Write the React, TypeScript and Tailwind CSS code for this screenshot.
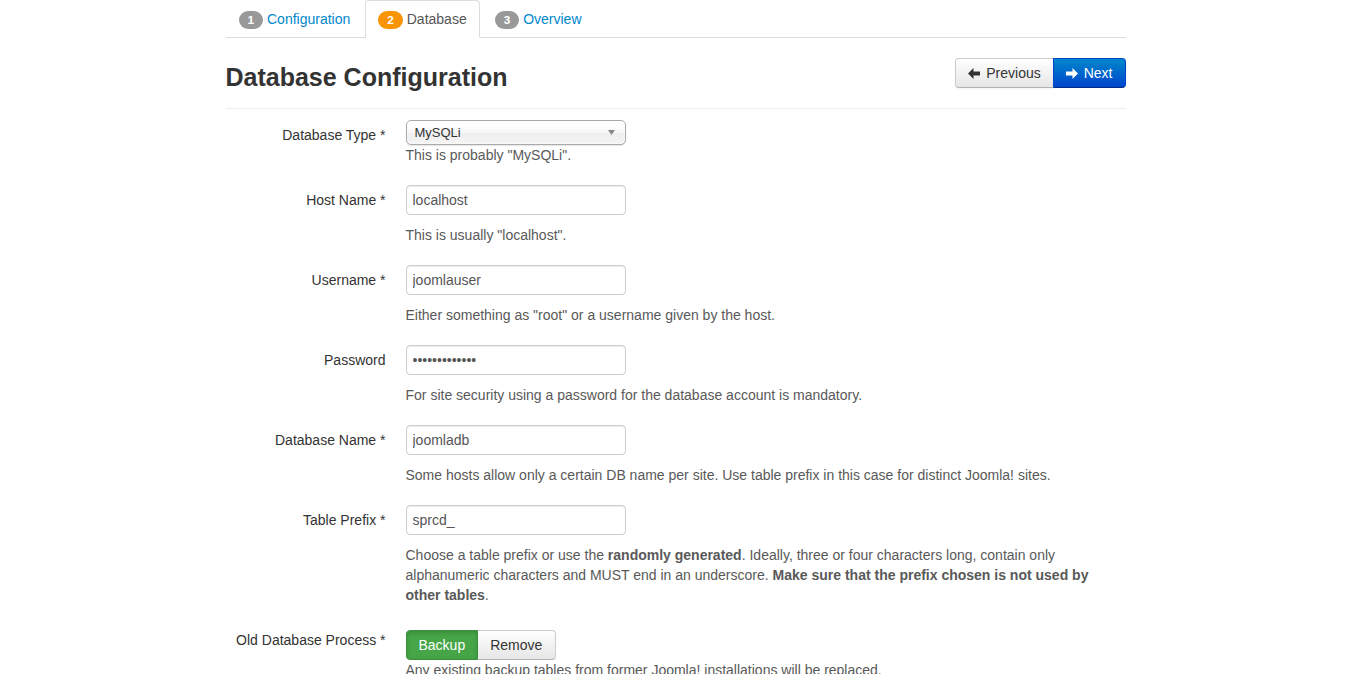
import React from "react";

const ArrowLeft = () => (
  <svg width="12" height="11" viewBox="0 0 12 11" className="inline-block mr-[6px] -mt-[2px] align-middle">
    <path d="M0 5.5 L5.5 0 V3.5 H12 V7.5 H5.5 V11 Z" fill="currentColor" />
  </svg>
);
const ArrowRight = () => (
  <svg width="12" height="11" viewBox="0 0 12 11" className="inline-block mr-[6px] -mt-[2px] align-middle">
    <path d="M12 5.5 L6.5 0 V3.5 H0 V7.5 H6.5 V11 Z" fill="currentColor" />
  </svg>
);

const Badge = ({ n, active }: { n: string; active?: boolean }) => (
  <span
    className={
      "inline-block px-[9px] py-[2px] rounded-[9px] text-[11.844px] font-bold leading-[14px] text-white align-baseline " +
      (active ? "bg-[#f89406]" : "bg-[#999999]")
    }
  >
    {n}
  </span>
);

const Label = ({ children }: { children: React.ReactNode }) => (
  <div className="w-[160px] shrink-0 text-right pt-[5px] leading-5 text-[#333]">{children}</div>
);

const Help = ({ children, className = "" }: { children: React.ReactNode; className?: string }) => (
  <div className={"leading-5 text-[#595959] " + className}>{children}</div>
);

const TextInput = ({ value, type = "text" }: { value: string; type?: string }) => (
  <input
    type={type}
    value={value}
    readOnly
    className="block w-[220px] h-[30px] px-[6px] border border-[#cccccc] rounded-[4px] text-[14px] text-[#555] bg-white shadow-[inset_0_1px_1px_rgba(0,0,0,0.075)] outline-none"
    style={{ fontFamily: "inherit" }}
  />
);

const Group = ({ label, children }: { label: React.ReactNode; children: React.ReactNode }) => (
  <div className="flex mb-[20px]">
    <Label>{label}</Label>
    <div className="ml-[20px] flex-1">{children}</div>
  </div>
);

export default function App() {
  return (
    <div
      className="min-h-[674px] bg-white text-[14px] leading-5 text-[#333]"
      style={{ fontFamily: '"Liberation Sans", Arial, Helvetica, sans-serif' }}
    >
      <div className="w-[900px] mx-auto">
        {/* Tabs */}
        <ul className="flex border-b border-[#dddddd] h-[38px]">
          <li className="mr-[2px]">
            <a className="block px-[12px] py-[8px] leading-5 border border-transparent rounded-t-[4px] text-[#0088cc]">
              <Badge n="1" /> Configuration
            </a>
          </li>
          <li className="mr-[2px] -mb-px">
            <a className="block px-[12px] py-[8px] leading-5 border border-[#dddddd] border-b-white bg-white rounded-t-[4px] text-[#555]">
              <Badge n="2" active /> Database
            </a>
          </li>
          <li className="mr-[2px]">
            <a className="block px-[12px] py-[8px] leading-5 border border-transparent rounded-t-[4px] text-[#0088cc]">
              <Badge n="3" /> Overview
            </a>
          </li>
        </ul>

        {/* Header */}
        <div className="h-[71px] border-b border-[#eeeeee] pt-[20px] flex justify-between items-start">
          <h2 className="text-[25px] font-bold leading-[30px] mt-[4px] text-[#333]">Database Configuration</h2>
          <div className="flex">
            <button className="h-[30px] px-[12px] border border-[#cccccc] border-b-[#b3b3b3] rounded-l-[4px] text-[#333] bg-[linear-gradient(#ffffff,#e6e6e6)] shadow-[inset_0_1px_0_rgba(255,255,255,0.2),0_1px_2px_rgba(0,0,0,0.05)] leading-5">
              <ArrowLeft />Previous
            </button>
            <button className="h-[30px] px-[12px] border border-[#0044cc] border-b-[#002a80] rounded-r-[4px] -ml-px text-white bg-[linear-gradient(#0088cc,#0044cc)] leading-5">
              <ArrowRight />Next
            </button>
          </div>
        </div>

        {/* Form */}
        <div className="mt-[11px]">
          <Group label="Database Type *">
            <div className="relative w-[220px] h-[25px] border border-[#aaaaaa] rounded-[5px] bg-[linear-gradient(#ffffff_20%,#f6f6f6_50%,#eeeeee_52%,#f4f4f4_100%)] shadow-[inset_0_0_3px_white,0_1px_1px_rgba(0,0,0,0.1)] pl-[8px] leading-[23px] text-[13px] text-[#333]">
              MySQLi
              <svg width="7" height="5" viewBox="0 0 7 5" className="absolute right-[10px] top-[9px]">
                <path d="M0 0 H7 L3.5 5 Z" fill="#888" />
              </svg>
            </div>
            <Help>This is probably "MySQLi".</Help>
          </Group>

          <Group label="Host Name *">
            <TextInput value="localhost" />
            <Help className="mt-[10px]">This is usually "localhost".</Help>
          </Group>

          <Group label="Username *">
            <TextInput value="joomlauser" />
            <Help className="mt-[10px]">Either something as "root" or a username given by the host.</Help>
          </Group>

          <Group label="Password">
            <TextInput type="password" value="aaaaaaaaaaaaa" />
            <Help className="mt-[10px]">For site security using a password for the database account is mandatory.</Help>
          </Group>

          <Group label="Database Name *">
            <TextInput value="joomladb" />
            <Help className="mt-[10px]">
              Some hosts allow only a certain DB name per site. Use table prefix in this case for distinct Joomla! sites.
            </Help>
          </Group>

          <Group label="Table Prefix *">
            <TextInput value="sprcd_" />
            <Help className="mt-[10px]">
              Choose a table prefix or use the <b>randomly generated</b>. Ideally, three or four characters long, contain
              only alphanumeric characters and MUST end in an underscore.{" "}
              <b>Make sure that the prefix chosen is not used by other tables</b>.
            </Help>
          </Group>

          <Group label="Old Database Process *">
            <div className="pt-[5px] flex">
              <button className="h-[30px] px-[12px] border border-[#3d8f3d] rounded-l-[4px] text-white bg-[#46a546] leading-5 shadow-[inset_0_2px_4px_rgba(0,0,0,0.15)]">
                Backup
              </button>
              <button className="h-[30px] pl-[12px] pr-[13px] border border-[#cccccc] border-b-[#b3b3b3] border-l-0 rounded-r-[4px] text-[#333] bg-[linear-gradient(#ffffff,#e6e6e6)] leading-5">
                Remove
              </button>
            </div>
            <Help>Any existing backup tables from former Joomla! installations will be replaced.</Help>
          </Group>
        </div>
      </div>
    </div>
  );
}
